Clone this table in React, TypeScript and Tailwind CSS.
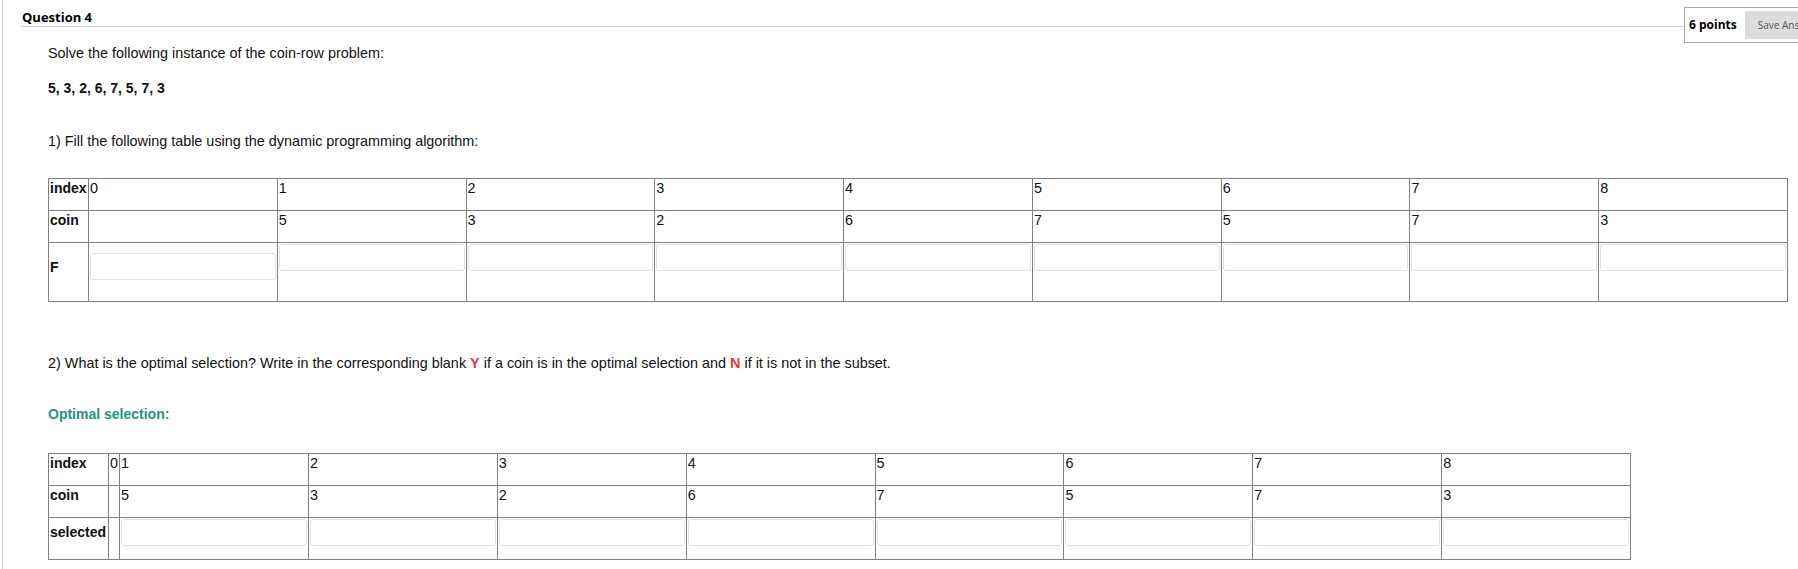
import React from "react";

const coins = [5, 3, 2, 6, 7, 5, 7, 3];

function Cell({ children, className = "" }: { children?: React.ReactNode; className?: string }) {
  return <div className={`border-r border-b border-[#808080] ${className}`}>{children}</div>;
}

function Blank({ className = "" }: { className?: string }) {
  return <div className={`mx-[1px] h-[27px] rounded-[3px] border border-[#e2e2e2] bg-white ${className}`} />;
}

function FillTable() {
  return (
    <div className="grid w-[1740px] grid-cols-[40px_repeat(9,1fr)] border-l border-t border-[#808080]">
      {/* index row */}
      <Cell className="h-[32px] px-[1px] pt-[1px] text-[14px] font-bold">index</Cell>
      {Array.from({ length: 9 }, (_, i) => (
        <Cell key={`i${i}`} className="h-[32px] px-[1px] pt-[1px]">
          {i}
        </Cell>
      ))}
      {/* coin row */}
      <Cell className="h-[32px] px-[1px] pt-[1px] text-[14px] font-bold">coin</Cell>
      <Cell className="h-[32px]" />
      {coins.map((c, i) => (
        <Cell key={`c${i}`} className="h-[32px] px-[1px] pt-[1px]">
          {c}
        </Cell>
      ))}
      {/* F row */}
      <Cell className="h-[59px] px-[1px] pt-[16px] text-[14px] font-bold">F</Cell>
      <Cell className="h-[59px]">
        <Blank className="mt-[10px]" />
      </Cell>
      {coins.map((_, i) => (
        <Cell key={`f${i}`} className="h-[59px]">
          <Blank className="mt-[1px]" />
        </Cell>
      ))}
    </div>
  );
}

function SelectionTable() {
  return (
    <div className="grid w-[1583px] grid-cols-[60px_11px_repeat(8,1fr)] border-l border-t border-[#808080]">
      <Cell className="h-[32px] px-[1px] pt-[1px] text-[14px] font-bold">index</Cell>
      <Cell className="h-[32px] pl-[1px] pt-[1px]">0</Cell>
      {coins.map((_, i) => (
        <Cell key={`i${i}`} className="h-[32px] px-[1px] pt-[1px]">
          {i + 1}
        </Cell>
      ))}
      <Cell className="h-[32px] px-[1px] pt-[1px] text-[14px] font-bold">coin</Cell>
      <Cell className="h-[32px]" />
      {coins.map((c, i) => (
        <Cell key={`c${i}`} className="h-[32px] px-[1px] pt-[1px]">
          {c}
        </Cell>
      ))}
      <Cell className="h-[42px] px-[1px] pt-[6px] text-[14px] font-bold">selected</Cell>
      <Cell className="h-[42px]" />
      {coins.map((_, i) => (
        <Cell key={`s${i}`} className="h-[42px]">
          <Blank className="mt-[1px]" />
        </Cell>
      ))}
    </div>
  );
}

export default function App() {
  return (
    <div className="h-[569px] w-full overflow-hidden bg-white font-['Liberation_Sans',Arial,sans-serif] text-[14.4px] leading-[16px] text-[#111]">
      <div className="ml-[2px] h-full border-l border-[#d3d3d3]">
        {/* header */}
        <div className="flex items-start pl-[18px]">
          <div className="h-[27px] w-[1663px] shrink-0 border-b border-[#cfcfcf] pl-[1px] pt-[8px] font-['Open_Sans',sans-serif] text-[13px] font-bold leading-[18px] text-black">
            Question 4
          </div>
          <div className="mt-[7px] flex h-[36px] w-[140px] shrink-0 items-start border border-[#a9a9a9] pl-[4px]">
            <span className="mt-[8px] shrink-0 whitespace-nowrap font-['Open_Sans',sans-serif] text-[12px] font-bold leading-[18px] text-black">
              6 points
            </span>
            <div className="ml-[8px] mt-[3px] flex h-[28px] shrink-0 items-center whitespace-nowrap bg-[#dcdcdc] px-[13px] font-['Open_Sans',sans-serif] text-[10px] text-[#555]">
              Save Answer
            </div>
          </div>
        </div>

        {/* body */}
        <div className="pl-[45px]">
          <p className="mt-[2px]">Solve the following instance of the coin-row problem:</p>
          <p className="mt-[19px] text-[14px] font-bold">5, 3, 2, 6, 7, 5, 7, 3</p>
          <p className="mt-[37px]">1) Fill the following table using the dynamic programming algorithm:</p>
          <div className="mt-[29px]">
            <FillTable />
          </div>
          <p className="mt-[53px]">
            2) What is the optimal selection? Write in the corresponding blank{" "}
            <span className="font-bold text-[#e53935]">Y</span> if a coin is in the optimal selection and{" "}
            <span className="font-bold text-[#e53935]">N</span> if it is not in the subset.
          </p>
          <p className="mt-[35px] text-[14px] font-bold text-[#1f9580]">Optimal selection:</p>
          <div className="mt-[31px]">
            <SelectionTable />
          </div>
        </div>
      </div>
    </div>
  );
}
